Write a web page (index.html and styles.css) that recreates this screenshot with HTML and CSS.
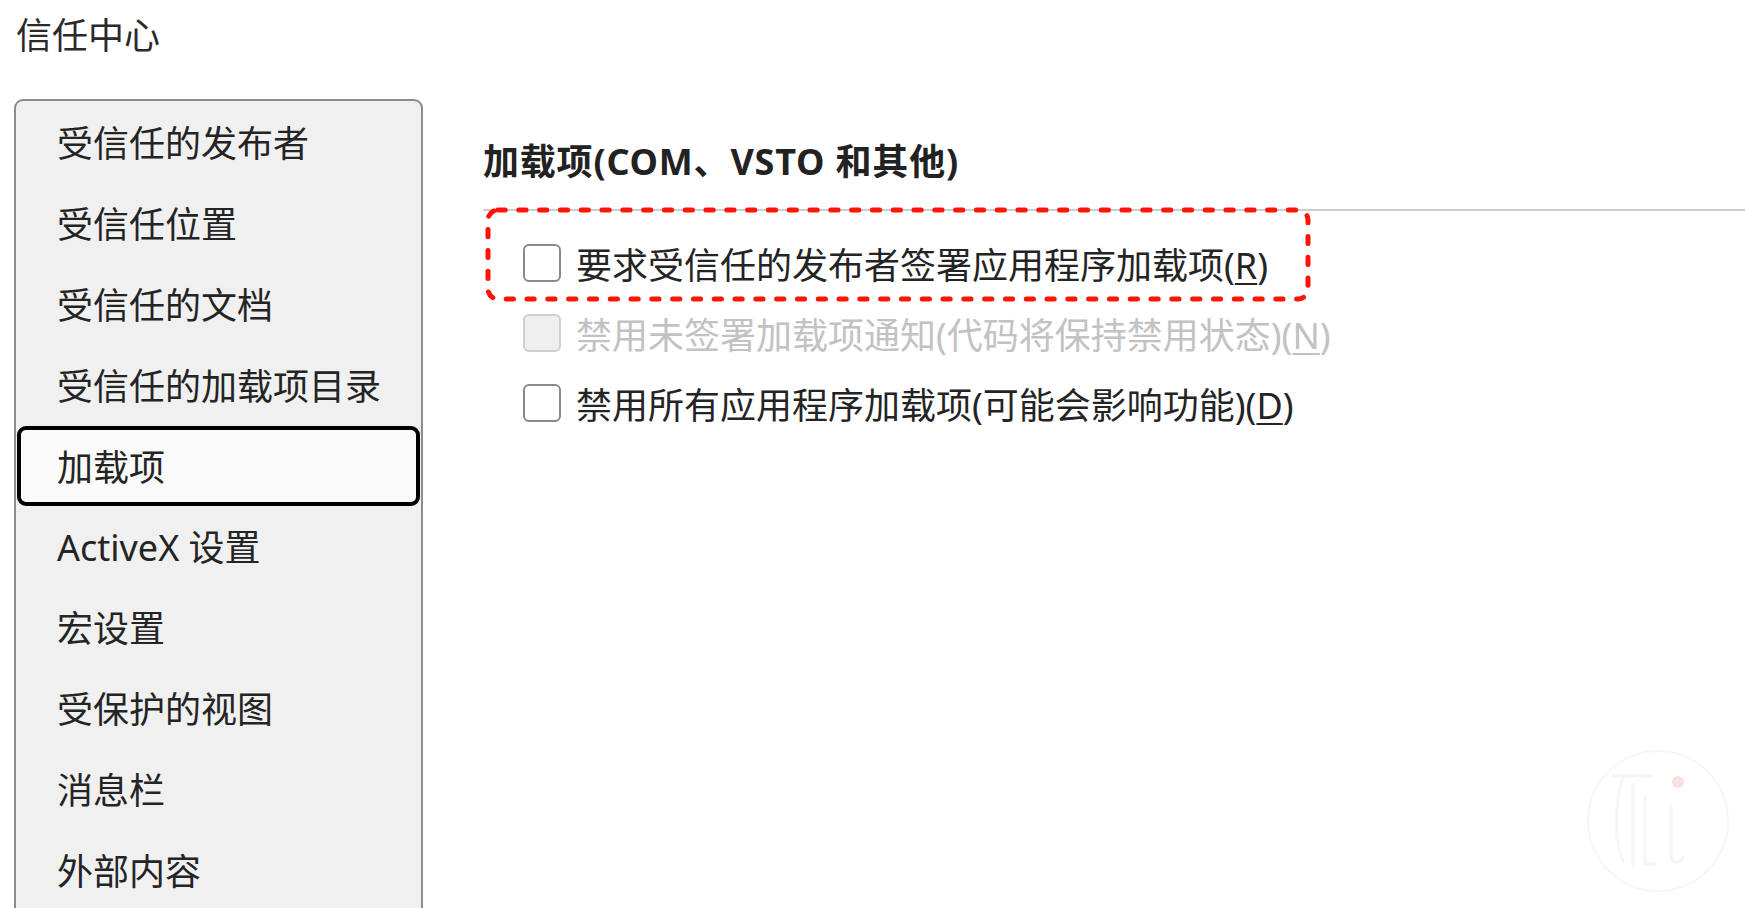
FILE: index.html
```html
<!DOCTYPE html>
<html lang="zh-CN">
<head>
<meta charset="utf-8">
<title>信任中心</title>
<link rel="stylesheet" href="styles.css">
</head>
<body>
<div class="page">
  <h1 class="title">信任中心</h1>
  <div class="layout">
    <nav class="nav">
      <div class="nav-item">受信任的发布者</div>
      <div class="nav-item">受信任位置</div>
      <div class="nav-item">受信任的文档</div>
      <div class="nav-item">受信任的加载项目录</div>
      <div class="nav-item selected">加载项</div>
      <div class="nav-item">ActiveX 设置</div>
      <div class="nav-item">宏设置</div>
      <div class="nav-item">受保护的视图</div>
      <div class="nav-item">消息栏</div>
      <div class="nav-item">外部内容</div>
    </nav>
    <main class="pane">
      <h2 class="group-heading">加载项(COM、VSTO 和其他)</h2>
      <div class="group-rule"></div>
      <div class="option highlighted">
        <span class="box"></span>
        <span class="label">要求受信任的发布者签署应用程序加载项(<u>R</u>)</span>
        <svg class="annot" width="820" height="89" viewBox="0 0 820 89" aria-hidden="true">
          <rect x="0" y="0" width="820" height="89" rx="10" ry="10" fill="none" stroke="#ff1405" stroke-width="5" stroke-linecap="round" stroke-dasharray="7.2 13.6"/>
        </svg>
      </div>
      <div class="option disabled">
        <span class="box"></span>
        <span class="label">禁用未签署加载项通知(代码将保持禁用状态)(<u>N</u>)</span>
      </div>
      <div class="option">
        <span class="box"></span>
        <span class="label">禁用所有应用程序加载项(可能会影响功能)(<u>D</u>)</span>
      </div>
    </main>
  </div>
  <svg class="watermark" width="150" height="150" viewBox="0 0 150 150" aria-hidden="true">
    <circle cx="75" cy="75" r="70" fill="none" stroke="#f7f7f7" stroke-width="2"/>
    <path d="M30 30 H68 M40 30 C32 60 30 90 40 115 M50 38 V120 M62 50 V118 H72 M88 60 V110 C88 118 96 118 100 112" fill="none" stroke="#f6f6f6" stroke-width="3" stroke-linecap="round"/>
    <circle cx="95" cy="36" r="6" fill="#fbe0e0"/>
  </svg>
</div>
</body>
</html>
```

FILE: styles.css
```css
html, body {
  margin: 0;
  padding: 0;
  background: #ffffff;
  height: 908px;
  overflow: hidden;
}

body {
  font-family: "Noto Sans", "Noto Sans CJK SC", sans-serif;
  color: #262626;
}

.page {
  position: relative;
  height: 908px;
}

.title {
  margin: 0;
  padding: 12px 0 0 16px;
  font-size: 36px;
  font-weight: 400;
  line-height: 48px;
  height: 48px;
  color: #2a2a2a;
}

.layout {
  display: flex;
  align-items: flex-start;
  gap: 60px;
  margin-top: 39px;
  padding-left: 14px;
}

.nav {
  flex: 0 0 409px;
  box-sizing: border-box;
  width: 409px;
  height: 840px;
  background: #f0f0f0;
  border: 2px solid #8c8c8c;
  border-radius: 9px;
  padding: 1px 1px 0;
}

.nav-item {
  box-sizing: border-box;
  height: 80.9px;
  border: 4px solid transparent;
  border-radius: 9px;
  padding-left: 36px;
  padding-bottom: 2px;
  display: flex;
  align-items: center;
  font-size: 36px;
  white-space: nowrap;
  color: #242424;
}

.nav-item.selected {
  border-color: #000000;
  background: #fafafa;
}

.pane {
  flex: 1;
  padding-top: 39px;
}

.group-heading {
  margin: 0;
  font-size: 36px;
  font-weight: 700;
  line-height: 48px;
  height: 48px;
  color: #222222;
  letter-spacing: 0.8px;
  white-space: nowrap;
}

.group-rule {
  margin-top: 23px;
  height: 2px;
  background: #cccccc;
}

.group-rule + .option {
  margin-top: 17px;
}

.option {
  position: relative;
  display: flex;
  align-items: center;
  height: 70px;
  padding-left: 40px;
  font-size: 36px;
  white-space: nowrap;
  color: #242424;
}

.box {
  box-sizing: border-box;
  flex: 0 0 38px;
  width: 38px;
  height: 38px;
  border: 2.5px solid #8a8a8a;
  border-radius: 6px;
  background: #ffffff;
}

.label {
  margin-left: 15px;
}

.label u {
  text-decoration-thickness: 2px;
  text-underline-offset: 4px;
}

.option.disabled {
  color: #c2c2c2;
}

.option.disabled .box {
  background: #efefef;
  border-color: #cfcfcf;
}

.annot {
  position: absolute;
  left: 5px;
  top: -18px;
  overflow: visible;
}

.watermark {
  position: absolute;
  left: 1583px;
  top: 746px;
}
```
